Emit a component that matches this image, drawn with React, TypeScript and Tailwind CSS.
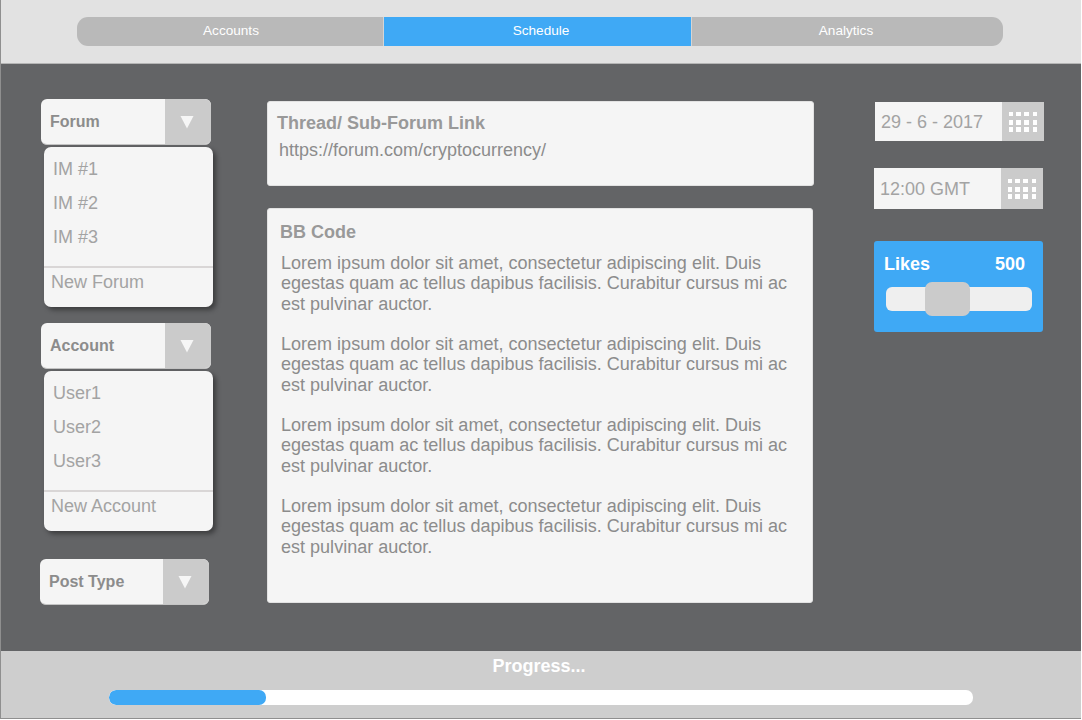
import React from "react";

const lorem =
  "Lorem ipsum dolor sit amet, consectetur adipiscing elit. Duis egestas quam ac tellus dapibus facilisis. Curabitur cursus mi ac est pulvinar auctor.";

function Select({ label, className = "" }: { label: string; className?: string }) {
  return (
    <div className={`flex h-[46px] overflow-hidden rounded-[6px] border-b border-[#c4c4c4] bg-[#f5f5f5] ${className}`}>
      <span className="flex-1 pl-[9px] pt-[13px] text-[16px] leading-[20px] font-bold text-[#8c8c8c]">{label}</span>
      <div className="flex w-[46px] items-center bg-[#cbcbcb] pl-[15px]">
        <svg width="14" height="14" viewBox="0 0 14 14">
          <path d="M0.5 1h13L7 13.5z" fill="#f6f6f6" />
        </svg>
      </div>
    </div>
  );
}

function Menu({ items, action }: { items: string[]; action: string }) {
  return (
    <div className="mt-[2px] ml-[4px] flex h-[160px] w-[169px] flex-col rounded-[7px] bg-[#f5f5f5] shadow-[3px_3px_5px_rgba(0,0,0,0.4)]">
      <div className="h-[119px] pl-[9px] pt-[5px] text-[18px] leading-[34px] text-[#a3a3a3]">
        {items.map((item) => (
          <div key={item}>{item}</div>
        ))}
      </div>
      <div className="border-t-2 border-[#d9d6d6] pl-[7px] pt-[3px] text-[18px] leading-[22px] text-[#a3a3a3]">{action}</div>
    </div>
  );
}

function GridIcon() {
  const rows = [
    [0, 4],
    [8, 5],
    [15, 5],
  ];
  const cols = [
    [0, 4],
    [7, 5],
    [15, 5],
    [24, 4],
  ];
  return (
    <svg width="28" height="20" viewBox="0 0 28 20" fill="#ffffff">
      {rows.map(([y, h]) =>
        cols.map(([x, w]) => <rect key={`${x}-${y}`} x={x} y={y} width={w} height={h} />)
      )}
    </svg>
  );
}

function Field({ value, className = "" }: { value: string; className?: string }) {
  return (
    <div className={`flex w-[169px] bg-[#f5f5f5] ${className}`}>
      <span className="flex-1 self-center pl-[6px] text-[18px] leading-[22px] text-[#a3a3a3]">{value}</span>
      <div className="flex w-[42px] items-center justify-center bg-[#cbcbcb]">
        <GridIcon />
      </div>
    </div>
  );
}

export default function App() {
  return (
    <div className="h-[720px] w-[1082px] bg-white font-['Liberation_Sans',Arial,sans-serif]">
      <div className="flex h-[719px] w-[1081px] flex-col border-b border-l border-[#8f8f8f]">
        {/* top tabs */}
        <div className="h-[64px] border-b border-[#b5b5b5] bg-[#e2e2e2] pl-[76px] pt-[17px]">
          <div className="flex h-[29px] w-[926px] overflow-hidden rounded-[11px] bg-[#b9b9b9] text-center text-[13.6px] leading-[27px] text-white">
            <div className="w-[306px] pl-[2px]">Accounts</div>
            <div className="w-[309px] border-x border-[#d5d5d5] bg-[#3fa9f5] pl-[7px]">Schedule</div>
            <div className="flex-1 pr-[3px]">Analytics</div>
          </div>
        </div>

        {/* main */}
        <div className="flex h-[587px] bg-[#636466] pl-[39px] pt-[35px]">
          <div className="w-[227px]">
            <Select label="Forum" className="ml-[1px] w-[170px]" />
            <Menu items={["IM #1", "IM #2", "IM #3"]} action="New Forum" />
            <Select label="Account" className="ml-[1px] mt-[16px] w-[170px]" />
            <Menu items={["User1", "User2", "User3"]} action="New Account" />
            <Select label="Post Type" className="mt-[28px] w-[169px]" />
          </div>

          <div className="w-[547px] pt-[2px]">
            <div className="h-[85px] rounded-[3px] border border-[#e2e2e2] bg-[#f5f5f5] pl-[9px] pt-[10px]">
              <div className="text-[18px] leading-[22px] font-bold text-[#999999]">Thread/ Sub-Forum Link</div>
              <div className="ml-[2px] mt-[6px] text-[18px] leading-[20px] text-[#8c8c8c]">https://forum.com/cryptocurrency/</div>
            </div>
            <div className="mt-[22px] h-[395px] w-[546px] rounded-[3px] border border-[#e2e2e2] bg-[#f5f5f5] pl-[13px] pr-[19px] pt-[13px]">
              <div className="-ml-[1px] text-[18px] leading-[20px] font-bold text-[#999999]">BB Code</div>
              <div className="mt-[11px] text-[18.05px] leading-[20.25px] text-[#8c8c8c]">
                {[0, 1, 2, 3].map((i) => (
                  <p key={i} className="mb-[20.25px]">{lorem}</p>
                ))}
              </div>
            </div>
          </div>

          <div className="ml-[60px] w-[170px] pt-[3px]">
            <Field value="29 - 6 - 2017" className="ml-[1px] h-[39px]" />
            <Field value="12:00 GMT" className="mt-[27px] h-[41px]" />
            <div className="mt-[32px] h-[91px] w-[169px] rounded-[3px] bg-[#3fa9f5] px-[10px] pt-[12px]">
              <div className="flex justify-between pr-[8px] text-[18px] leading-[22px] font-bold text-white">
                <span>Likes</span>
                <span>500</span>
              </div>
              <div className="relative mt-[12px] ml-[2px] h-[24px] w-[146px] rounded-[6px] bg-[#efefef]">
                <div className="absolute left-[39px] -top-[5px] h-[34px] w-[45px] rounded-[7px] bg-[#cbcbcb]" />
              </div>
            </div>
          </div>
        </div>

        {/* progress */}
        <div className="flex-1 bg-[#cecece] pl-[108px] pt-[5px]">
          <div className="w-[860px] text-center text-[18px] leading-[20px] font-bold text-white">Progress...</div>
          <div className="mt-[14px] h-[15px] w-[864px] overflow-hidden rounded-[7px] bg-white">
            <div className="h-full w-[157px] rounded-[7px] bg-[#3fa9f5]" />
          </div>
        </div>
      </div>
    </div>
  );
}
